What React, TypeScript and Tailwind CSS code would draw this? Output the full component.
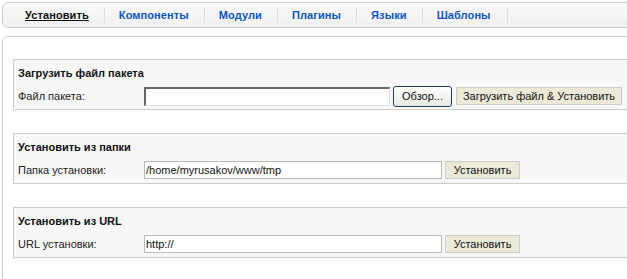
import React from "react";

const tabs = ["Компоненты", "Модули", "Плагины", "Языки", "Шаблоны"];

function Section({
  title,
  label,
  children,
}: {
  title: string;
  label: string;
  children: React.ReactNode;
}) {
  return (
    <div className="h-[51px] border border-[#cccccc] border-r-0 bg-[#f7f7f7] pl-[4px]">
      <div className="h-[24px] pt-[7px] text-[11px] font-bold leading-[13px] text-[#111]">{title}</div>
      <div className="flex h-[24px] items-center">
        <div className="w-[126px] text-[11px] text-[#222]">{label}</div>
        {children}
      </div>
    </div>
  );
}

export default function App() {
  return (
    <div
      className="h-[279px] w-[627px] overflow-hidden bg-white"
      style={{ fontFamily: '"Liberation Sans", Arial, sans-serif' }}
    >
      <div className="ml-[2px] mt-[2px] flex h-[26px] w-[660px] items-center rounded-l-[6px] border border-[#cccccc] bg-gradient-to-b from-[#fafafa] to-[#f0f0f0] pl-[22px] text-[11px] font-bold tracking-[0.1px]">
        <span className="text-[#111] underline">Установить</span>
        {tabs.map((t) => (
          <React.Fragment key={t}>
            <span className="ml-[15px] mr-[14px] h-[15px] w-px bg-[#dddddd]" />
            <span className="text-[#0b55c4]">{t}</span>
          </React.Fragment>
        ))}
        <span className="ml-[16px] h-[15px] w-px bg-[#dddddd]" />
      </div>

      <div className="ml-[2px] mt-[8px] h-[260px] w-[660px] rounded-tl-[6px] border border-[#cccccc] bg-white pl-[10px] pt-[22px]">
        <div className="flex flex-col gap-[23px]">
          <Section title="Загрузить файл пакета" label="Файл пакета:">
            <div className="h-[19px] w-[246px] border-l-2 border-t-2 border-b border-r border-l-[#666] border-t-[#666] border-b-[#ddd] border-r-[#ddd] bg-white" />
            <button className="ml-[3px] h-[21px] w-[59px] rounded-[3px] border border-[#1c3c74] bg-gradient-to-b from-white to-[#e8e8e2] text-[11px] text-[#111]">
              Обзор...
            </button>
            <button className="ml-[4px] h-[18px] w-[166px] border border-[#cccccc] bg-[#ece9d8] text-[11px] text-[#111]">
              Загрузить файл &amp; Установить
            </button>
          </Section>
          <Section title="Установить из папки" label="Папка установки:">
            <div className="flex h-[18px] w-[298px] items-center border border-[#bbbbbb] bg-white pl-[1px] text-[11px] text-[#111]">
              /home/myrusakov/www/tmp
            </div>
            <button className="ml-[3px] h-[18px] w-[75px] border border-[#cccccc] bg-[#ece9d8] text-[11px] text-[#111]">
              Установить
            </button>
          </Section>
          <Section title="Установить из URL" label="URL установки:">
            <div className="flex h-[18px] w-[298px] items-center border border-[#bbbbbb] bg-white pl-[1px] text-[11px] text-[#111]">
              http://
            </div>
            <button className="ml-[3px] h-[18px] w-[75px] border border-[#cccccc] bg-[#ece9d8] text-[11px] text-[#111]">
              Установить
            </button>
          </Section>
        </div>
      </div>
    </div>
  );
}
